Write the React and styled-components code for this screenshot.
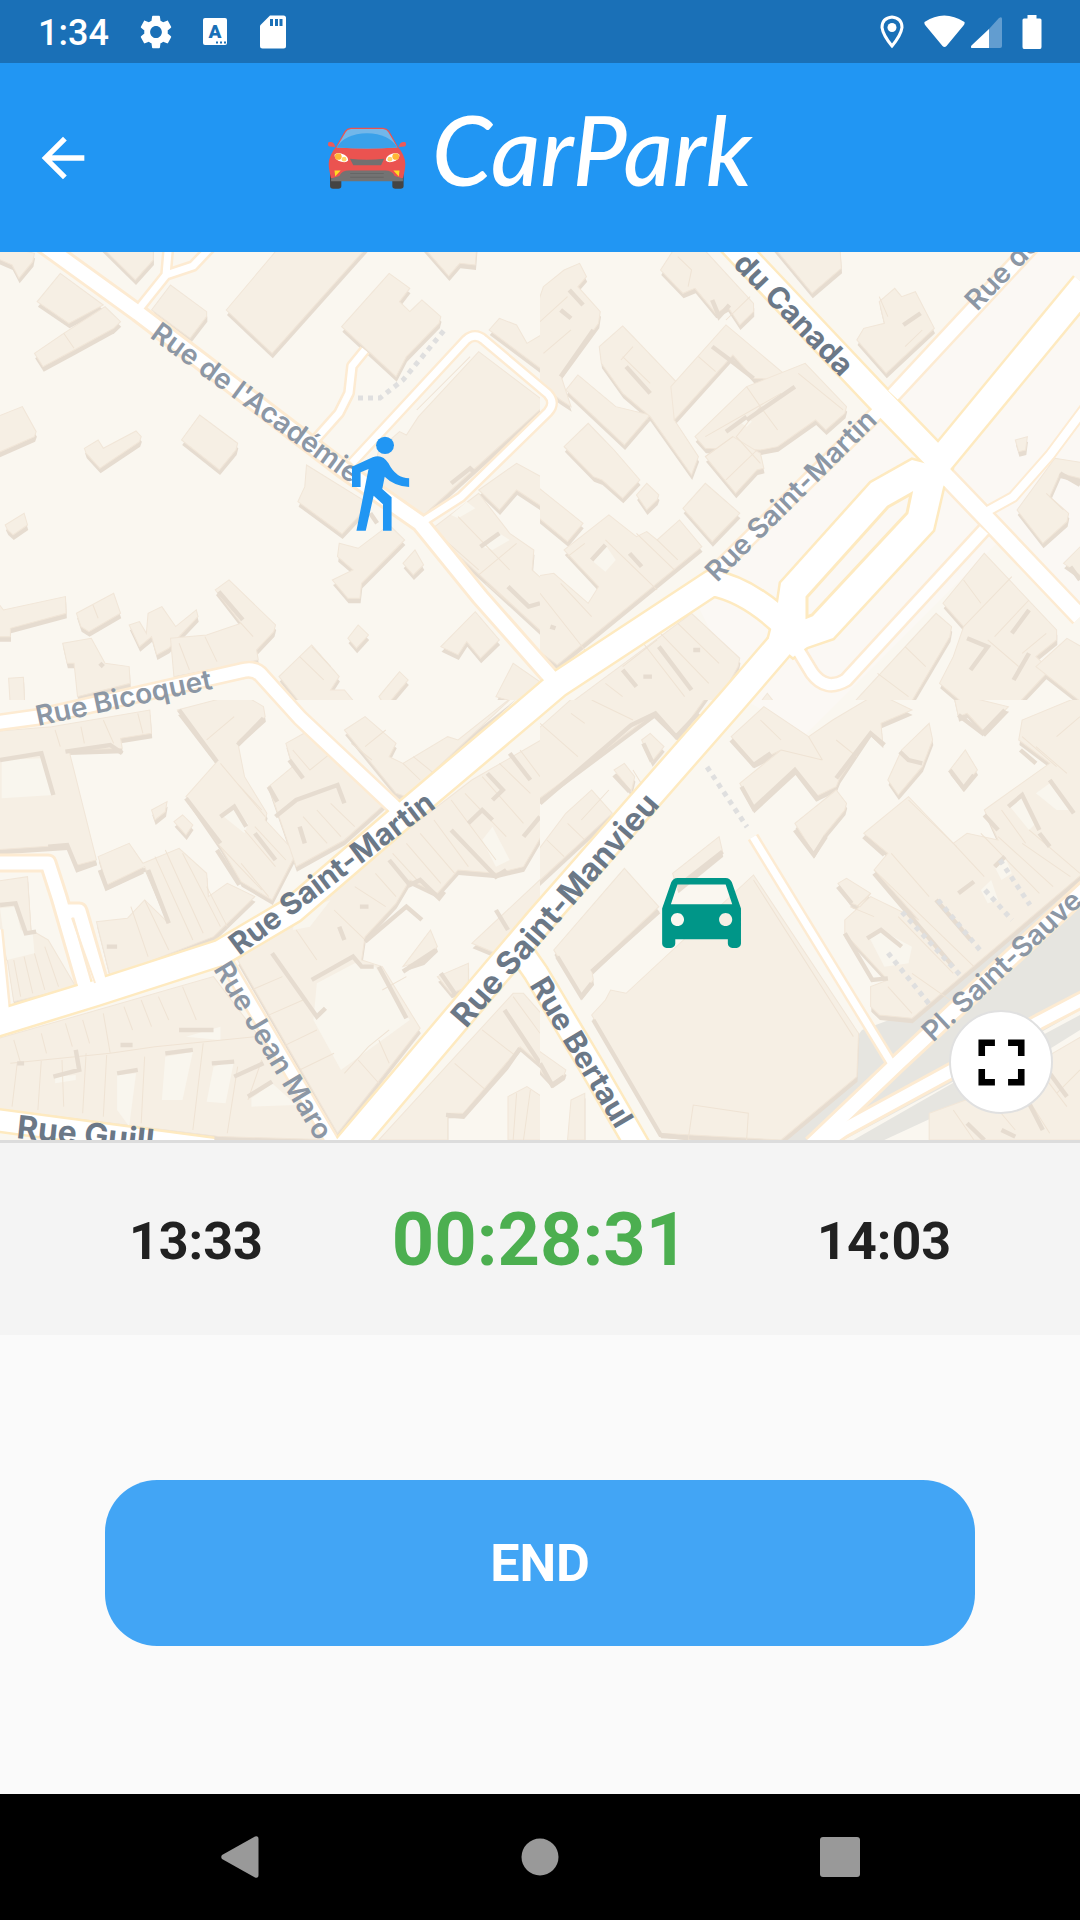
import React from "react";
import styled, { createGlobalStyle } from "styled-components";

const GlobalStyle = createGlobalStyle`
  *, *::before, *::after { box-sizing: border-box; }
  body { margin: 0; background: #fafafa; font-family: Roboto, "Noto Sans", sans-serif; }
  button { border: 0; padding: 0; background: none; font: inherit; color: inherit; cursor: pointer; }
`;

const Screen = styled.div`
  display: flex;
  flex-direction: column;
  min-height: 100vh;
`;

const StatusBar = styled.div`
  display: flex;
  align-items: center;
  justify-content: space-between;
  height: 63px;
  padding: 0 38px;
  background: #1a70b7;
  color: #fff;
`;

const StatusGroup = styled.div`
  display: flex;
  align-items: center;
  gap: ${(p) => p.$gap}px;
`;

const Clock = styled.span`
  padding-top: 2px;
  font-size: 36px;
  line-height: 40px;
  font-weight: 500;
`;

const Icon = styled.svg`
  display: block;
  flex: none;
  width: ${(p) => p.$w}px;
  height: ${(p) => p.$h}px;
`;

const IconLetter = styled.text`
  font-family: Roboto, sans-serif;
  font-size: 19px;
  font-weight: 900;
  fill: #1a70b7;
`;

const Header = styled.header`
  display: grid;
  grid-template-columns: 1fr auto 1fr;
  align-items: center;
  height: 189px;
  padding: 0 31px;
  background: #2196f3;
  color: #fff;
`;

const BackButton = styled.button`
  justify-self: start;
`;

const Brand = styled.h1`
  display: flex;
  align-items: center;
  gap: 26px;
  margin: 0;
  font-family: Lato, "Open Sans", sans-serif;
  font-size: 96px;
  line-height: 112px;
  font-style: italic;
  font-weight: 500;
`;

const BrandName = styled.span`
  padding-bottom: 18px;
`;

const MapPanel = styled.section`
  position: relative;
  border-bottom: 3px solid #dcdcdc;
`;

const MapDrawing = styled.svg`
  display: block;
  width: 100%;
  height: auto;
`;

const Label = styled.text`
  font-family: Inter, "Open Sans", sans-serif;
  font-size: ${(p) => p.$size}px;
  font-weight: ${(p) => (p.$minor ? 600 : 700)};
  fill: ${(p) => (p.$minor ? "#8c97a5" : "#6b7887")};
`;

const ExpandButton = styled.button`
  position: absolute;
  right: 27px;
  bottom: 26px;
  display: flex;
  align-items: center;
  justify-content: center;
  width: 104px;
  height: 104px;
  border: 2px solid #e0e0e0;
  border-radius: 50%;
  background: #fff;
`;

const TimerBar = styled.section`
  display: flex;
  align-items: center;
  justify-content: space-evenly;
  height: 192px;
  padding-top: 5px;
  background: #f4f4f4;
  color: #212121;
`;

const Time = styled.time`
  font-size: 52px;
  line-height: 60px;
  font-weight: 700;
`;

const Countdown = styled(Time)`
  padding-bottom: 4px;
  font-size: 74px;
  line-height: 84px;
  color: #4caf50;
`;

const Actions = styled.main`
  display: flex;
  flex: 1;
  align-items: center;
  padding: 40px 105px 44px;
`;

const EndButton = styled.button`
  flex: 1;
  height: 166px;
  padding-top: 2px;
  border-radius: 52px;
  background: #42a5f5;
  color: #fff;
  font-size: 52px;
  font-weight: 700;
`;

const NavBar = styled.nav`
  display: flex;
  align-items: center;
  justify-content: space-evenly;
  height: 126px;
  background: #000;
`;

const NavButton = styled.button`
  display: flex;
  align-items: center;
  justify-content: center;
  width: 120px;
  height: 100px;
`;

/* The city plan is stored as four survey sheets, each with its own origin. */
const SHEETS = [
  {
    at: "translate(0 250) scale(.3444 .3333)",
    blocks: [
      "108,155 175,70 300,165 200,220", "100,310 185,250 305,170 350,215 330,235 215,300 125,350",
      "285,0 445,0 445,30 393,90", "0,0 100,10 95,35 55,85 35,45 0,20", "440,180 495,105 600,185 600,200 552,265",
      "657,180 820,0 1075,0 790,310", "1220,0 1385,0 1380,45 1335,40 1303,78",
      "992,230 1130,70 1190,115 1160,155 1190,185 1225,150 1280,200 1275,220 1180,320 1150,380",
      "0,505 65,470 105,545 100,560 0,615", "245,595 285,570 300,595 395,543 410,560 405,575 290,655 250,610",
      "527,570 580,495 690,580 685,600 637,660", "15,825 70,790 80,825 38,855 22,840",
      "1100,600 1160,545 1180,555 1215,500 1390,305 1568,460 1225,800 1080,680", "890,645 1070,760 1040,800 993,852 865,755 885,710",
      "985,880 1040,895 1130,825 1175,870 1050,1000 1045,1045 1010,1045 965,990 1025,960 980,920",
      "1170,940 1205,900 1230,945 1200,975", "1420,240 1450,205 1500,225 1530,280 1568,245 1568,370",
      "1390,720 1500,640 1568,690 1568,780 1500,720 1450,780", "1250,840 1390,730 1480,850 1550,900 1545,960 1568,1000 1568,1160",
      "1280,1190 1380,1085 1450,1170 1395,1225 1355,1175 1330,1215", "0,1040 10,1080 190,1040 192,1090 30,1135 30,1160 0,1160",
      "222,1090 330,1030 350,1090 258,1145 235,1130",
      "375,1125 405,1115 425,1150 430,1090 470,1070 510,1130 570,1080 575,1100 520,1160 490,1195 455,1215 440,1160 405,1190",
      "625,1020 665,990 800,1125 795,1145 745,1200 750,1230 505,1280 495,1165 600,1155 700,1120",
      "182,1180 265,1165 305,1240 375,1250 378,1300 225,1340 215,1240 195,1240",
      "810,1280 905,1185 985,1280 960,1320 1000,1320 1040,1350 880,1350", "1010,1165 1040,1125 1070,1155 1035,1195",
      "1100,1340 1160,1265 1185,1290 1120,1350", "1440,1340 1490,1240 1568,1310 1540,1350", "25,1285 68,1282 72,1350 30,1350",
    ],
    courts: ["1310,795 1355,755 1380,775 1330,805", "1400,890 1450,850 1480,870 1430,900"],
    seams: "M185,250L215,295M270,1065L285,1105M520,1180L550,1260M595,1160L630,1235M700,1120L735,1160M870,1220L940,1290M1365,320L1210,480M1270,850L1390,960M1330,800L1480,960M1390,975L1500,880M1410,1000L1480,1060M905,1190L960,1250",
    shades: "M1310,700L1365,655L1375,665M1170,755L1215,800M1395,890L1450,850M1475,1010L1535,1070L1568,1060M1075,790L1095,820M635,1025L705,1110M290,1240L300,1250",
  },
  {
    at: "translate(540 250) scale(.3444 .3333)",
    blocks: [
      "10,110 70,60 115,40 135,80 110,110 175,185 170,220 60,375 90,470 60,450 0,390 0,200",
      "350,60 400,0 460,0 620,160 620,185 580,225 545,170 510,190 450,115 415,130", "670,0 870,0 875,55 790,130",
      "985,155 1030,115 1050,140 1090,125 1145,235 1005,370 920,270 940,235 1000,220",
      "75,420 110,375 220,470 320,495 245,585", "172,290 240,228 275,265 400,400 390,510 460,620 440,675 320,500 240,430 178,340",
      "380,410 540,225 730,390 620,385 560,315 390,510", "450,560 600,410 770,340 890,470 885,490 830,540 800,510 690,590 640,600 480,595",
      "480,620 560,560 640,610 650,655 630,660 568,730", "70,590 140,520 215,600 290,690 240,745 180,690 155,680",
      "280,735 310,700 345,735 340,750 310,780", "415,775 480,700 580,790 500,875", "0,700 125,820 80,875 0,790",
      "70,900 200,795 280,860 310,845 340,870 405,810 470,890 50,1245 0,1190 0,980 40,970 140,1060 170,1010",
      "75,1350 440,1090 580,1225 575,1250 510,1350", "1385,780 1495,625 1568,640 1568,690 1510,670 1480,740 1535,790 1530,815 1460,880",
      "1520,940 1568,870 1568,990",
      "1170,1060 1290,910 1500,1140 1500,1170 1440,1220 1480,1260 1380,1350 1240,1350 1160,1300 1200,1220 1230,1130",
      "1440,1250 1530,1165 1568,1200 1568,1350", "900,1350 1150,1090 1195,1130 1190,1160 1070,1350",
      "1380,570 1415,560 1410,600 1390,605", "630,1350 660,1330 690,1350",
    ],
    courts: ["155,935 190,885 220,930 190,965", "585,520 600,500 615,515 600,530"],
    seams: "M80,140L0,215M90,240L10,310M400,20L440,60L430,110M610,140L540,210M460,320L510,365M240,320L320,400M270,290L235,330M600,410L640,470L690,540M480,560L700,430M750,370L880,480M640,470L570,560L640,640M560,560L480,620M630,600L540,690M190,870L340,1020M130,880L80,920M280,850L390,960M340,870L400,930M0,1030L130,1200M60,1000L150,1100M240,1250L340,1170M300,1180L420,1340M350,1150L490,1300M400,1120L520,1240M190,1300L240,1340M1230,990L1280,1060M1370,980L1230,1130M1420,1050L1320,1160M1300,1170L1390,1250M1060,1190L1120,1250M980,1270L1070,1340M1470,1150L1400,1210M1470,730L1520,780M1110,240L1060,290M985,140L1010,200",
    shades: "M60,180L90,205M85,120L125,165M155,240L60,380M250,350L320,430M500,290L545,325L620,385M600,510L740,410M540,545L600,500M1055,225L1105,190M260,910L295,950M150,930L190,885M345,1190L440,1320M240,1260L280,1310M445,1200L465,1200M300,1280L325,1280M1240,1165L1300,1190L1250,1260M1420,1080L1370,1150M1420,1210L1375,1290M1510,670L1568,705M500,150L520,200L550,165M1540,950L1568,990M30,1130L45,1135",
  },
  {
    at: "translate(0 700) scale(.3444 .3333)",
    blocks: [
      "0,95 150,80 435,30 440,100 350,115 355,145 200,150 280,480 225,495 195,435 0,450",
      "515,30 700,0 765,20 770,50 690,125 710,230 775,340 770,360 860,460 790,600 700,545 640,440 540,290 630,185",
      "285,470 375,430 415,490 520,445 600,520 605,590 660,550 740,590 620,710 320,830 280,665 370,655 420,600 490,670 420,500 310,555",
      "440,330 485,305 480,335 450,360", "505,365 530,345 560,375 540,405", "830,130 900,90 1120,310 1000,420 860,500 780,260 850,200",
      "1000,90 1060,50 1150,130 1130,170 1170,190 1300,110 1330,120 1500,0 1180,290 1150,280",
      "690,780 1370,240 1568,110 1568,380 1520,500 1440,520 1330,510 1270,580 1190,540 1150,610 1060,710 1050,780 1110,800 1220,985 980,1300",
      "1170,800 1250,690 1270,740 1230,780", "1270,830 1360,790 1360,860 1310,880", "1370,730 1568,520 1568,600 1440,760",
      "0,545 80,530 90,690 140,720 220,860 40,905 20,770 0,720", "0,1020 620,830 980,1320 640,1310 0,1225",
      "1100,1320 1490,880 1520,880 1568,960 1568,1110 1510,1040 1345,1240 1300,1240 1300,1320",
      "1475,1190 1530,1160 1568,1200 1568,1320 1475,1320",
    ],
    courts: [
      "5,180 120,175 155,285 5,295", "920,850 1030,790 1090,800 1190,960 990,1110 910,960", "0,625 45,620 60,690 95,700 100,760 20,780",
      "160,1130 220,1125 220,1140 160,1150", "480,1070 560,1055 530,1200 470,1200", "340,1125 395,1120 375,1280 340,1230",
      "620,1100 680,1080 655,1210 600,1205", "540,1010 640,980 640,1020", "650,350 680,325 720,370 710,400",
      "860,640 960,600 900,680 850,690", "1400,420 1430,380 1480,480 1440,500", "730,1195 790,1150 860,1215 730,1220",
    ],
    seams: "M160,90L175,140M235,80L245,130M300,60L330,130M400,40L415,100M600,120L680,50M640,190L770,350M680,240L760,330M710,390L800,500M640,440L760,570M740,380L830,480M700,490L780,590M850,150L900,210L960,160M880,350L950,430M920,330L990,410M960,310L1030,380M1060,140L1120,90M1020,130L1080,180M1170,190L1220,240M1200,170L1260,220M450,470L560,720M480,450L590,700M530,460L640,680M600,560L660,680M380,620L430,770M420,600L490,750M40,780L60,890M70,770L95,880M100,760L130,870M130,740L170,860M360,920L385,990M410,900L440,980M460,890L490,960M530,860L570,960M120,1000L135,1060M190,970L210,1040M240,960L260,1030M300,940L320,1060M40,1020L60,1090M50,1090L35,1220M120,1080L110,1230M180,1080L185,1220M250,1060L240,1240M310,1060L300,1250M420,1070L410,1270M590,1030L560,1290M690,1100L660,1300M760,1080L720,1200M30,1090L320,1060L450,1040L740,1010M730,870L820,830M770,950L880,900M820,1040L920,990M870,1110L970,1060M1000,1120L1070,1040L1130,990M1040,1080L1100,1150M1100,1020L1130,1090M860,690L920,780M970,630L1060,720M1030,560L1120,620M1090,520L1150,590M1140,460L1220,550M1180,430L1280,550M1220,400L1320,520M1260,360L1360,500M1310,300L1440,480M1350,280L1470,410M1400,230L1520,370M1450,190L1540,280M1510,150L1568,230M1110,870L1180,830M1490,890L1568,1000M1400,990L1500,1070M1320,1090L1410,1170M1500,1180L1490,1320M1540,1170L1520,1320",
    shades: "M0,180L120,160L155,285M190,155L320,135L355,160M520,30L630,185M540,295L640,430M690,135L765,55M640,350L680,320L715,380M800,350L860,300L980,255L1000,310M840,180L880,235M780,260L805,305M630,450L695,555M740,400L800,480M870,380L885,430M140,440L195,435L225,510L280,490M290,510L310,565L415,515M430,510L490,670M0,615L45,610L75,700L105,695M310,740L340,740M520,990L620,990M480,1060L560,1050M155,1130L230,1110L220,1050M340,1120L400,1110M615,1090L680,1085M680,1130L765,1090M720,1190L790,1145M790,760L920,950L945,925M905,840L1025,770L1050,800L1085,800M1100,800L1180,955M1060,725L1180,620L1225,660M1130,480L1190,555L1220,540L1275,595L1290,575M1310,390L1440,530L1470,510M1360,370L1400,330L1430,360M1480,160L1540,240M1415,220L1460,270L1430,300M1520,410L1568,350M1440,630L1475,690M1170,815L1265,750M1280,820L1320,880M1465,930L1568,1090M1295,1245L1345,1250L1470,1105L1510,1045M985,680L1000,720M1045,620L1070,620M350,1035L385,1035M50,1090L70,1090",
  },
  {
    at: "translate(540 700) scale(.3444 .3333)",
    blocks: [
      "0,100 110,0 490,0 400,110 330,40 0,310", "295,120 320,100 360,140 325,185", "215,210 245,190 275,230 265,275",
      "75,340 150,270 210,340 0,560 0,470", "40,750 245,505 345,620 150,810 155,840 120,885", "385,520 520,410 530,455 400,565",
      "150,945 190,900 205,870 250,880 620,525 925,1000 920,1130 700,1320 350,1300",
      "555,110 650,20 780,110 850,60 980,0 1080,30 990,70 995,130 960,95 870,235 860,260 800,290 740,210 620,325 580,250 700,150 620,190",
      "740,370 860,270 890,310 885,330 825,405 795,460", "1050,150 1130,70 1140,120 1110,200 1040,285 1010,240",
      "1190,210 1235,150 1270,210 1230,260", "1200,0 1360,20 1290,95 1240,40 1215,50",
      "1290,330 1480,190 1390,120 1400,60 1568,0 1568,510 1080,955 985,945 960,920 960,860 1010,840 885,700 885,660 960,590 1100,660 970,510 1010,460 940,400 1070,290 1200,430 1240,400 1330,420",
      "865,550 890,535 960,580 930,620 905,610", "0,1040 75,1110 70,1125 35,1150 0,1090", "90,1200 130,1180 130,1320 80,1320",
      "1130,1240 1290,1180 1568,1000 1568,1320 1130,1320",
    ],
    courts: [
      "1365,320 1400,290 1440,370 1420,390", "1440,280 1480,250 1540,330 1500,330", "955,710 990,690 1080,740 1070,790 1000,800",
      "1280,570 1310,540 1330,600 1300,610", "1320,500 1350,470 1370,520 1340,540",
    ],
    seams: "M0,70L110,170M90,40L130,70M150,0L270,60M200,270L120,360M80,370L130,420M20,420L70,470M270,210L300,260M620,540L910,1010M430,1320L445,1215L605,1240L600,1320M640,60L700,120M700,150L820,180M780,110L820,180M860,120L920,170M1400,110L1500,200M1500,110L1568,50M1440,140L1530,220M1340,330L1410,430M1200,430L1290,530M1280,400L1450,580M1330,410L1490,560M1400,430L1540,530M1420,390L1568,520M970,510L1260,800M1020,460L1130,590M1040,650L1200,820M1080,820L1190,900M1010,860L1080,940M900,620L970,650M960,580L920,620M1070,300L1210,440M1370,1120L1480,1300M1290,1180L1380,1290M1420,1070L1530,1220M1500,1180L1568,1110M1200,1230L1260,1320",
    shades: "M0,310L265,75L335,40L395,110L460,40M300,130L325,185M215,225L260,275M50,770L120,890L150,850M150,815L345,635M400,560L530,455M555,120L620,195L670,160M585,260L620,325L740,210L810,300M740,390L795,465L830,410M860,235L960,100L1000,135M1045,155L1070,180L1110,190M1190,210L1230,265L1260,225M1215,45L1285,100L1350,30M1290,345L1330,390M1360,320L1400,285L1450,390M1480,240L1550,340M1450,400L1480,440M970,520L1200,800M940,410L1000,465M885,700L965,840L1010,835M950,715L990,690L1050,740M1150,600L1250,720M1215,580L1260,545M1320,500L1350,470M865,560L905,610M155,960L350,1305L430,1315M0,1090L35,1155L70,1130M1395,150L1440,190M1240,1270L1290,1320M1380,1310L1340,1290M1420,1210L1460,1290M1480,1120L1530,1190",
  },
];

/* Pushes corners that touch a sheet border past it, so the outline is clipped away there. */
const bleed = (points) =>
  points
    .split(" ")
    .map((pair) => {
      const [x, y] = pair.split(",").map(Number);
      return [x <= 0 ? -20 : x >= 1568 ? 1588 : x, y <= 0 ? -20 : y >= 1350 ? 1370 : y].join(",");
    })
    .join(" ");

/* Streets: path, carriageway width, kerb width; main streets have the stronger yellow kerb. */
const STREETS = [
  { d: "M30,235L55,253L138,313L344,470L420,523L480,597L555,682", w: 14, k: 20 },
  { d: "M169,240L166,275L138,310M166,275L193,266L212,246", w: 7, k: 12 },
  { d: "M365,350L352,366L349,393L339,413L315,440", w: 7, k: 12 },
  { d: "M352,463L466,340Q475,332 484,340L548,394Q556,403 548,412L461,497L422,522", w: 7, k: 12 },
  { d: "M893,395L1040,237", w: 13, k: 18 },
  { d: "M712,575L885,405", w: 12, k: 17 },
  { d: "M940,470L988,520L1080,617", w: 16, k: 21 },
  { d: "M984,513L1013,497L1050,455L1085,408", w: 8, k: 12 },
  { d: "M984,530L846,680Q826,692 812,673L795,645", w: 11, k: 16 },
  { d: "M-5,723L38,717L241,671Q255,667 262,676L300,718L400,812", w: 13, k: 18 },
  { d: "M-5,863L48,863L59,897L86,990M68,911L79,911L100,983", w: 13, k: 19 },
  { d: "M-4,930L4,1012", w: 10, k: 15 },
  { d: "M222,955L333,1143", w: 11, k: 16 },
  { d: "M-5,1120L213,1149", w: 20, k: 25, main: true },
  { d: "M520,950L536,973L592,1067L640,1150", w: 22, k: 27, main: true },
  { d: "M753,837L892,1064", w: 7, k: 12 },
  { d: "M1090,885L1000,968L898,1063L812,1145", w: 14, k: 20 },
  { d: "M1085,998L1039,1022L953,1070L843,1130L800,1160", w: 12, k: 18 },
  { d: "M-5,1024L96,993L220,953L293,910L401,817L530,708L557,685L712,583Q750,590 790,630", w: 24, k: 29, main: true },
  { d: "M795,628L733,700L540,920L340,1156", w: 26, k: 31, main: true },
  { d: "M725,236L740,252L877,397L940,462", w: 24, k: 29, main: true },
  { d: "M935,467L1085,285", w: 26, k: 31, main: true },
];

const JUNCTION = "M778,603L781,583L871,483L912,460L951,470L943,487L933,530L833,638L807,647L793,657L769,638Z";

const LABELS = [
  { text: "Rue de l'Académie", x: 149, y: 337, turn: 36, size: 28, minor: true },
  { text: "Rue Saint-Martin", x: 717, y: 583, turn: -45, size: 28, minor: true },
  { text: "du Canada", x: 732, y: 265, turn: 46, size: 30 },
  { text: "Rue de", x: 977, y: 312, turn: -46, size: 28, minor: true },
  { text: "Rue Bicoquet", x: 38, y: 726, turn: -12, size: 28, minor: true },
  { text: "Rue Saint-Martin", x: 239, y: 956, turn: -37, size: 30 },
  { text: "Rue Saint-Manvieu", x: 466, y: 1029, turn: -49, size: 32 },
  { text: "Rue Jean Maro", x: 213, y: 969, turn: 59, size: 28, minor: true },
  { text: "Rue Bertaul", x: 529, y: 985, turn: 59, size: 30 },
  { text: "Rue Guill", x: 16, y: 1138, turn: 6, size: 32 },
  { text: "Pl. Saint-Sauve", x: 933, y: 1043, turn: -43, size: 28, minor: true },
];

const FOOTPATHS = [
  "M358,398H380L403,380L446,328", "M707,767L747,827", "M888,953L930,1005",
  "M902,912L960,975", "M938,900L980,950", "M985,890L1012,920", "M1000,860L1030,905",
];

function CityMap() {
  return (
    <MapDrawing viewBox="0 252 1080 888" role="img" aria-label="Map with your position and your car">
      <clipPath id="sheet"><rect width="1568" height="1350" /></clipPath>
      <rect y="252" width="1080" height="888" fill="#faf7f0" />
      <path d="M690,590L890,392L1030,252H1080V610L1000,540L805,735L745,700Z" fill="#fbf8f4" />
      <path d="M862,1030L930,1005L1080,870V1010L975,1070L840,1142H775Z M850,1142L953,1083L1080,1015V1030L960,1105L880,1142Z" fill="#e6e5e0" />
      {SHEETS.map((sheet) => (
        <g key={sheet.at} transform={sheet.at} clipPath="url(#sheet)">
          {sheet.blocks.map((p) => <polygon key={p} points={bleed(p)} fill="#e6dcd0" transform="translate(2 15)" />)}
          {sheet.blocks.map((p) => <polygon key={p} points={bleed(p)} fill="#f6efe4" stroke="#f1e6d8" strokeWidth="3" />)}
          {sheet.courts.map((p) => <polygon key={p} points={p} fill="#f9f6ee" />)}
          <path d={sheet.seams} fill="none" stroke="#efe3d4" strokeWidth="3" />
          <path d={sheet.shades} fill="none" stroke="#e6dcd0" strokeWidth="13" />
        </g>
      ))}
      {STREETS.map((s) => (
        <path key={s.d} d={s.d} fill="none" stroke={s.main ? "#feeac0" : "#fdebd2"} strokeWidth={s.k} strokeLinejoin="round" />
      ))}
      <path d={JUNCTION} fill="#fff" stroke="#feeac0" strokeWidth="5" />
      {STREETS.map((s) => (
        <path key={s.d} d={s.d} fill="none" stroke="#fff" strokeWidth={s.w} strokeLinejoin="round" />
      ))}
      <path d={JUNCTION} fill="#fff" />
      <path d="M807,617V597L888,507L911,494L907,513L812,615Z" fill="#fbf8f4" stroke="#feeac0" strokeWidth="3" />
      <path d="M72,918L95,983" stroke="#fdebd2" strokeWidth="2" />
      {FOOTPATHS.map((d) => (
        <path key={d} d={d} fill="none" stroke="#dfdfdf" strokeWidth="5" strokeDasharray="5 5" />
      ))}
      {LABELS.map((l) => (
        <Label key={l.text + l.x} $size={l.size} $minor={l.minor} transform={`translate(${l.x} ${l.y}) rotate(${l.turn})`}>
          {l.text}
        </Label>
      ))}
      <g fill="#2196f3" transform="translate(0 250) scale(.3444 .3333)">
        <ellipse cx="1118" cy="586" rx="26" ry="26" />
        <path d="M1022,650L1082,622Q1110,610 1128,640Q1150,685 1188,685V711Q1144,708 1117,680L1110,717L1137,742V842H1112V763L1085,737L1062,842H1035L1070,657L1047,667V711H1022Z" />
      </g>
      <path
        fill="#009688"
        transform="translate(649 856) scale(4.38)"
        d="M18.92 6.01C18.72 5.42 18.16 5 17.5 5h-11c-.66 0-1.21.42-1.42 1.01L3 12v8c0 .55.45 1 1 1h1c.55 0 1-.45 1-1v-1h12v1c0 .55.45 1 1 1h1c.55 0 1-.45 1-1v-8l-2.08-5.99zM6.5 16c-.83 0-1.5-.67-1.5-1.5S5.67 13 6.5 13s1.5.67 1.5 1.5S7.33 16 6.5 16zm11 0c-.83 0-1.5-.67-1.5-1.5s.67-1.5 1.5-1.5 1.5.67 1.5 1.5-.67 1.5-1.5 1.5zM5 11l1.5-4.5h11L19 11H5z"
      />
    </MapDrawing>
  );
}

function CarLogo() {
  return (
    <Icon $w={78} $h={62} viewBox="955 380 228 185" preserveAspectRatio="none" aria-hidden="true">
      <path d="M961,500H994V556Q994,564 985,564H970Q961,564 961,556ZM1143,500H1176V556Q1176,564 1167,564H1152Q1143,564 1143,556Z" fill="#444" />
      <path d="M978,440L1004,392Q1010,383 1022,382H1116Q1128,383 1134,392L1160,440Q1180,465 1181,490Q1181,505 1174,534H964Q957,505 957,490Q958,465 978,440Z" fill="#eb5350" />
      <path d="M980,441L1007,395Q1011,387 1022,386H1116Q1127,387 1131,395L1158,441Q1069,447 980,441Z" fill="#72b7ea" />
      <path d="M980,441Q1005,400 1069,399Q1133,400 1158,441Q1069,447 980,441Z" fill="#39a1ea" />
      <path d="M957,425Q974,422 976,440L959,438Q954,436 955,430ZM1181,425Q1164,422 1162,440L1179,438Q1184,436 1183,430Z" fill="#eb5a5a" />
      <path d="M1019,475Q1069,480 1119,475L1110,494H1029Z" fill="#737070" />
      <path d="M964,534L988,526Q996,510 1016,510H1122Q1142,510 1150,526L1174,534V542H964Z" fill="#737373" />
      <path d="M1020,519H1118M1020,530H1118" stroke="#666" strokeWidth="3" />
      <path d="M974,463Q982,452 1003,463Q1014,470 1014,480Q1008,488 994,484Q974,480 974,463ZM1164,463Q1156,452 1135,463Q1124,470 1124,480Q1130,488 1144,484Q1164,480 1164,463Z" fill="#fff" />
      <g fill="#ffb636"><circle cx="985" cy="468" r="10" /><circle cx="1153" cy="468" r="10" /></g>
      <g fill="#ffd469"><circle cx="1002" cy="476" r="7" /><circle cx="1136" cy="476" r="7" /></g>
      <path d="M974,510H992L976,528ZM1164,510H1146L1162,528Z" fill="#ffdc22" />
    </Icon>
  );
}

export default function App() {
  return (
    <>
      <GlobalStyle />
      <Screen>
        <StatusBar>
          <StatusGroup $gap={31}>
            <Clock>1:34</Clock>
            <Icon $w={32} $h={34} viewBox="2.2 2 19.6 20" preserveAspectRatio="none" fill="#fff" aria-hidden="true">
              <path d="M19.14 12.94c.04-.3.06-.61.06-.94s-.02-.64-.07-.94l2.03-1.58c.18-.14.23-.41.12-.61l-1.92-3.32c-.12-.22-.37-.29-.59-.22l-2.39.96c-.5-.38-1.03-.7-1.62-.94l-.36-2.54c-.04-.24-.24-.41-.48-.41h-3.84c-.24 0-.43.17-.47.41l-.36 2.54c-.59.24-1.13.57-1.62.94l-2.39-.96c-.22-.08-.47 0-.59.22L2.74 8.87c-.12.21-.08.47.12.61l2.03 1.58c-.05.3-.09.63-.09.94s.02.64.07.94l-2.03 1.58c-.18.14-.23.41-.12.61l1.92 3.32c.12.22.37.29.59.22l2.39-.96c.5.38 1.03.7 1.62.94l.36 2.54c.05.24.24.41.48.41h3.84c.24 0 .44-.17.47-.41l.36-2.54c.59-.24 1.13-.56 1.62-.94l2.39.96c.22.08.47 0 .59-.22l1.92-3.32c.12-.22.07-.47-.12-.61l-2.01-1.58zM12 15.6c-1.98 0-3.6-1.62-3.6-3.6s1.62-3.6 3.6-3.6 3.6 1.62 3.6 3.6-1.62 3.6-3.6 3.6z" />
            </Icon>
            <Icon $w={26} $h={34} viewBox="0 0 26 34" aria-hidden="true">
              <rect x="0" y="3" width="24" height="27" rx="2" fill="#fff" />
              <IconLetter x="12" y="23" textAnchor="middle">A</IconLetter>
              <path d="M13 27.500H23" stroke="#1a70b7" strokeWidth="2" strokeDasharray="2 2" />
            </Icon>
            <Icon $w={26} $h={34} viewBox="0 0 26 34" aria-hidden="true">
              <path d="M10 .5H23.500Q26 .5 26 3V31Q26 33.500 23.500 33.500H2.500Q0 33.500 0 31V10.500Z" fill="#fff" />
              <path d="M11.500 4V11M16.500 4V11M21 4V11" stroke="#1a70b7" strokeWidth="3" />
            </Icon>
          </StatusGroup>
          <StatusGroup $gap={20}>
            <Icon $w={24} $h={34} viewBox="0 0 24 34" aria-hidden="true">
              <path d="M12 2Q2 3 2 12.500Q3 20 12 31Q21 20 22 12.500Q22 3 12 2Z" fill="none" stroke="#fff" strokeWidth="3" />
              <circle cx="12" cy="12.500" r="4.500" fill="#fff" />
            </Icon>
            <StatusGroup $gap={6}>
              <Icon $w={41} $h={34} viewBox="0 0 41 34" fill="#fff" aria-hidden="true">
                <path d="M.5 7Q20 -6 40.500 7Q41 9 39.500 10.500L22.500 31Q20.500 33 18.500 31L1.500 10.500Q0 9 .5 7Z" />
              </Icon>
              <Icon $w={31} $h={34} viewBox="0 0 31 34" aria-hidden="true">
                <path d="M18 14L28 3Q31 1 31 4V31Q31 33 29 33H18Z" fill="#629dd0" />
                <path d="M18 14V33H1.500Q-1 33 .5 30.500Z" fill="#fff" />
              </Icon>
            </StatusGroup>
            <Icon $w={20} $h={34} viewBox="0 0 20 34" fill="#fff" aria-hidden="true">
              <path d="M5.500 0H14.500V3.500H18Q19.500 3.500 19.500 5V32Q19.500 34 18 34H2Q.5 34 .5 32V5Q.5 3.500 2 3.500H5.500Z" />
            </Icon>
          </StatusGroup>
        </StatusBar>

        <Header>
          <BackButton type="button" aria-label="Back">
            <Icon $w={64} $h={64} viewBox="0 0 24 24" fill="#fff">
              <path d="M20 11H7.830l5.590-5.590L12 4l-8 8 8 8 1.410-1.410L7.830 13H20v-2z" />
            </Icon>
          </BackButton>
          <Brand>
            <CarLogo />
            <BrandName>CarPark</BrandName>
          </Brand>
        </Header>

        <MapPanel>
          <CityMap />
          <ExpandButton type="button" aria-label="Full screen map">
            <Icon $w={79} $h={79} viewBox="0 0 24 24" fill="#000">
              <path d="M7 14H5v5h5v-2H7v-3zm-2-4h2V7h3V5H5v5zm12 7h-3v2h5v-5h-2v3zM14 5v2h3v3h2V5h-5z" />
            </Icon>
          </ExpandButton>
        </MapPanel>

        <TimerBar>
          <Time>13:33</Time>
          <Countdown>00:28:31</Countdown>
          <Time>14:03</Time>
        </TimerBar>

        <Actions>
          <EndButton type="button">END</EndButton>
        </Actions>

        <NavBar>
          <NavButton type="button" aria-label="Back">
            <Icon $w={38} $h={42} viewBox="0 0 38 42" fill="#999">
              <path d="M1 19L34 .5Q37.500 -.5 37.500 3V39Q37.500 42.500 34 41.500L1 23Q-.5 21 1 19Z" />
            </Icon>
          </NavButton>
          <NavButton type="button" aria-label="Home">
            <Icon $w={38} $h={38} viewBox="0 0 38 38" fill="#999"><circle cx="19" cy="19" r="18.500" /></Icon>
          </NavButton>
          <NavButton type="button" aria-label="Recent apps">
            <Icon $w={40} $h={40} viewBox="0 0 40 40" fill="#999"><rect width="40" height="40" rx="3" /></Icon>
          </NavButton>
        </NavBar>
      </Screen>
    </>
  );
}
